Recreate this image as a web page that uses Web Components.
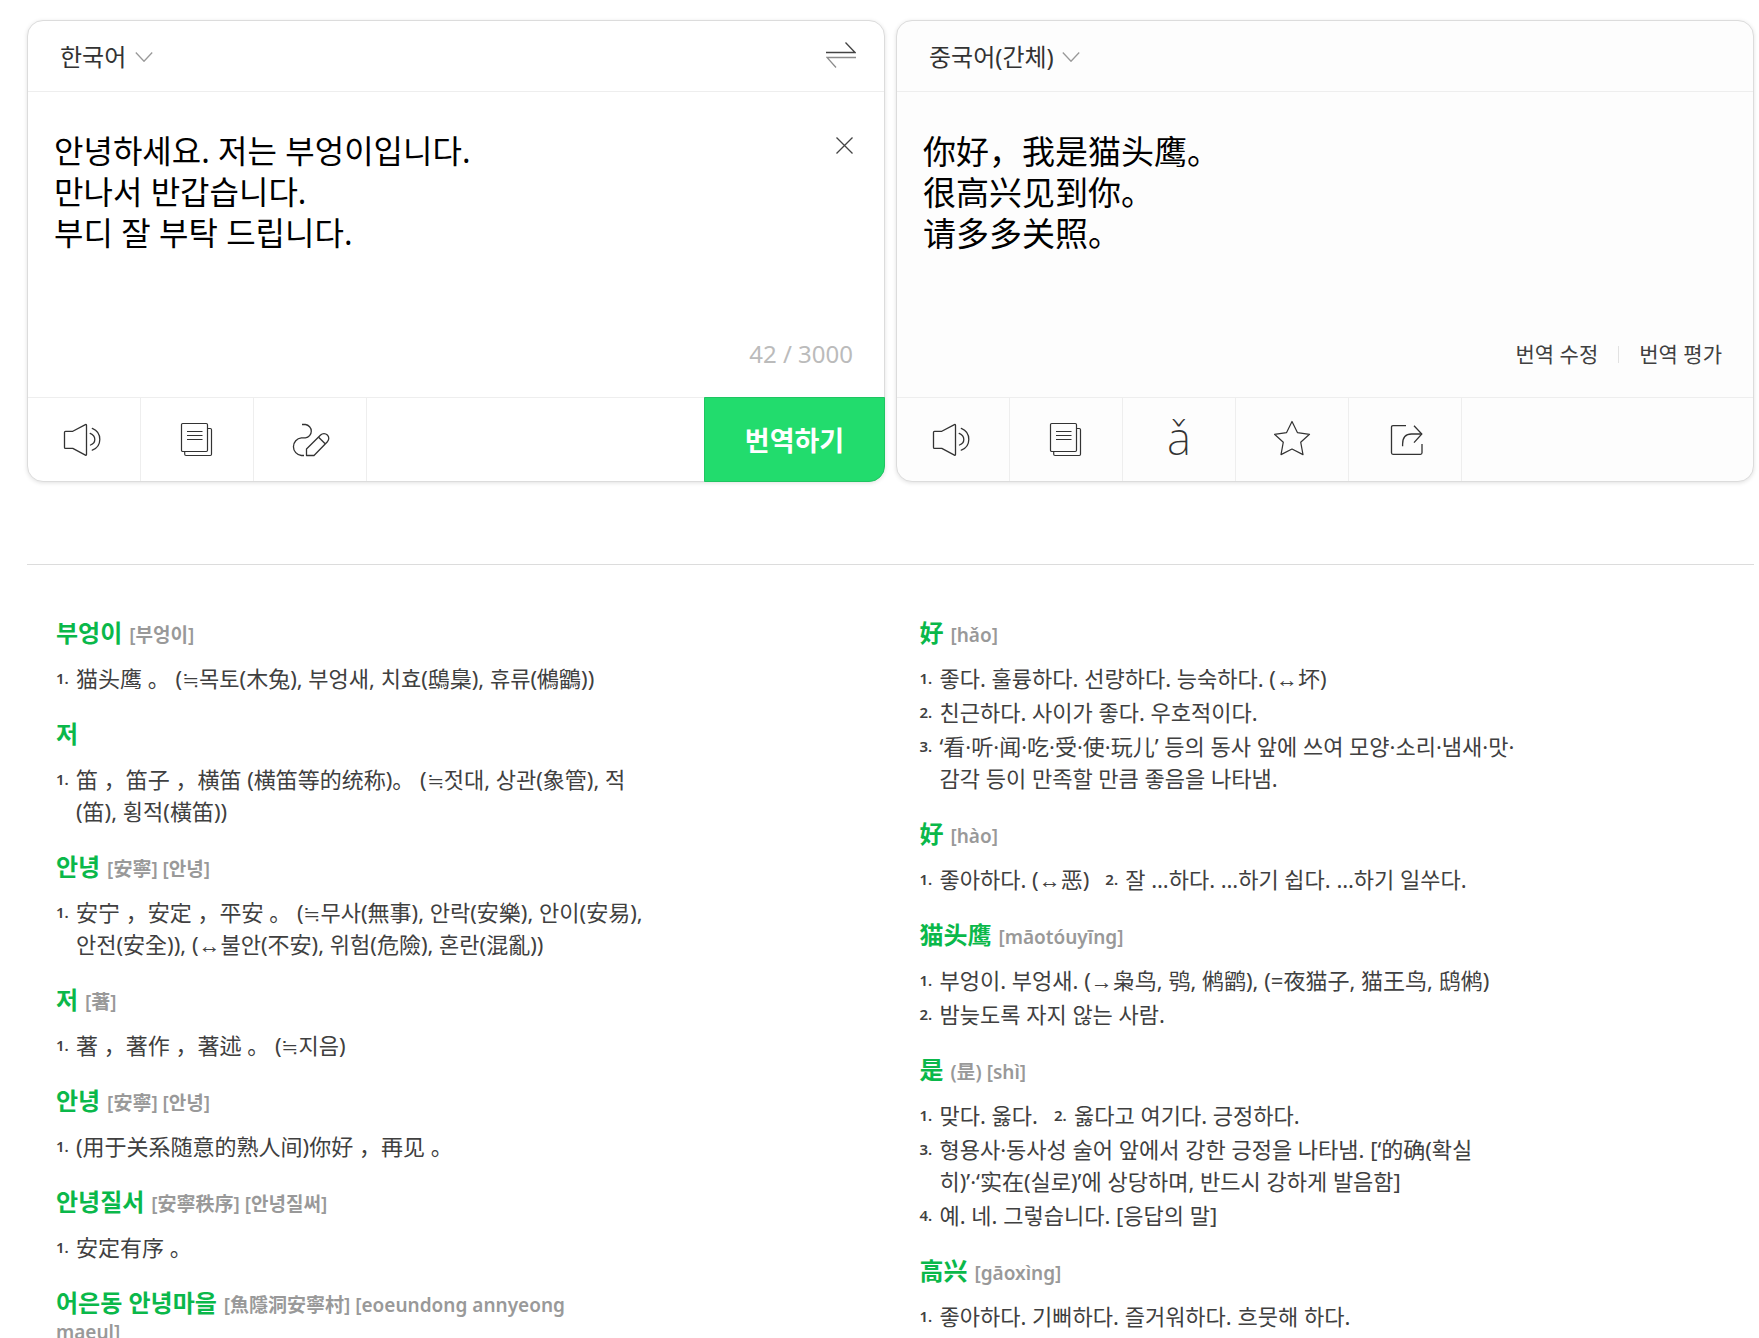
<!DOCTYPE html>
<html lang="ko">
<head>
<meta charset="utf-8">
<title>번역기</title>
<style>
  html { background: #fff; }
  body {
    margin: 0;
    font-family: "Noto Sans", "Noto Sans CJK KR", sans-serif;
    color: #404040;
    --line: #dcdcdc;
    --soft-line: #eeeeee;
    --brand: #22dc6d;
    --brand-line: #1fc562;
    --word: #0ab84a;
    --mute: #999999;
  }
  [lang="zh"] { font-family: "Noto Sans CJK SC", sans-serif; }
  .sign { font-family: "Noto Sans CJK SC", sans-serif; line-height: 0; }
  .arrow { font-family: "Liberation Sans", sans-serif; line-height: 0; }
</style>
</head>
<body>

<translator-page>
  <translate-card slot="card">
    <language-picker slot="head" label="원본 언어" value="한국어"></language-picker>
    <icon-button slot="head" label="언어 바꾸기" icon="swap"></icon-button>
    <source-text slot="text"></source-text>
    <char-count slot="foot" count="42" max="3000"></char-count>
    <icon-button slot="tools" cell label="듣기" icon="speaker"></icon-button>
    <icon-button slot="tools" cell label="복사" icon="copy"></icon-button>
    <icon-button slot="tools" cell label="필기 인식" icon="pen"></icon-button>
    <submit-button slot="action">번역하기</submit-button>
  </translate-card>

  <translate-card slot="card" tinted>
    <language-picker slot="head" label="번역 언어" value="중국어(간체)"></language-picker>
    <result-text slot="text" lang="zh">你好，我是猫头鹰。<br>很高兴见到你。<br>请多多关照。</result-text>
    <result-links slot="foot"></result-links>
    <icon-button slot="tools" cell label="듣기" icon="speaker"></icon-button>
    <icon-button slot="tools" cell label="복사" icon="copy"></icon-button>
    <icon-button slot="tools" cell label="발음" icon="pinyin"></icon-button>
    <icon-button slot="tools" cell label="즐겨찾기" icon="star"></icon-button>
    <icon-button slot="tools" cell label="공유" icon="share"></icon-button>
  </translate-card>

  <dictionary-column slot="dictionary">
    <word-entry word="부엉이" sound="[부엉이]">
      <word-sense n="1.">猫头鹰 。 (<span class="sign">≒</span>목토(木兔), 부엉새, 치효(鴟梟), 휴류(鵂鶹))</word-sense>
    </word-entry>
    <word-entry word="저">
      <word-sense n="1.">笛 ，笛子 ，横笛 (横笛等的统称)。 (<span class="sign">≒</span>젓대, 상관(象管), 적(笛), 횡적(橫笛))</word-sense>
    </word-entry>
    <word-entry word="안녕" sound="[安寧] [안녕]">
      <word-sense n="1.">安宁 ，安定 ，平安 。 (<span class="sign">≒</span>무사(無事), 안락(安樂), 안이(安易), 안전(安全)), (<span class="arrow">↔</span>불안(不安), 위험(危險), 혼란(混亂))</word-sense>
    </word-entry>
    <word-entry word="저" sound="[著]">
      <word-sense n="1.">著 ，著作 ，著述 。 (<span class="sign">≒</span>지음)</word-sense>
    </word-entry>
    <word-entry word="안녕" sound="[安寧] [안녕]">
      <word-sense n="1.">(用于关系随意的熟人间)你好 ，再见 。</word-sense>
    </word-entry>
    <word-entry word="안녕질서" sound="[安寧秩序] [안녕질써]">
      <word-sense n="1.">安定有序 。</word-sense>
    </word-entry>
    <word-entry word="어은동 안녕마을" sound="[魚隱洞安寧村] [eoeundong annyeong maeul]"></word-entry>
  </dictionary-column>

  <dictionary-column slot="dictionary">
    <word-entry word="好" sound="[hǎo]">
      <word-sense n="1.">좋다. 훌륭하다. 선량하다. 능숙하다. (<span class="arrow">↔</span>坏)</word-sense>
      <word-sense n="2.">친근하다. 사이가 좋다. 우호적이다.</word-sense>
      <word-sense n="3.">‘看·听·闻·吃·受·使·玩儿’ 등의 동사 앞에 쓰여 모양·소리·냄새·맛·감각 등이 만족할 만큼 좋음을 나타냄.</word-sense>
    </word-entry>
    <word-entry word="好" sound="[hào]">
      <word-sense n="1." brief>좋아하다. (<span class="arrow">↔</span>恶)</word-sense>
      <word-sense n="2." brief>잘 …하다. …하기 쉽다. …하기 일쑤다.</word-sense>
    </word-entry>
    <word-entry word="猫头鹰" sound="[māotóuyīng]">
      <word-sense n="1.">부엉이. 부엉새. (<span class="arrow">→</span>枭鸟, 鸮, 鸺鹠), (=夜猫子, 猫王鸟, 鸱鸺)</word-sense>
      <word-sense n="2.">밤늦도록 자지 않는 사람.</word-sense>
    </word-entry>
    <word-entry word="是" sound="(昰) [shì]">
      <word-sense n="1." brief>맞다. 옳다.</word-sense>
      <word-sense n="2." brief>옳다고 여기다. 긍정하다.</word-sense>
      <word-sense n="3.">형용사·동사성 술어 앞에서 강한 긍정을 나타냄. [‘的确(확실히)’·‘实在(실로)’에 상당하며, 반드시 강하게 발음함]</word-sense>
      <word-sense n="4.">예. 네. 그렇습니다. [응답의 말]</word-sense>
    </word-entry>
    <word-entry word="高兴" sound="[gāoxìng]">
      <word-sense n="1.">좋아하다. 기뻐하다. 즐거워하다. 흐뭇해 하다.</word-sense>
    </word-entry>
  </dictionary-column>
</translator-page>

<script>
const RESET = `
  *, *::before { box-sizing: border-box; }
  button, select, textarea { font: inherit; color: inherit; margin: 0; padding: 0; border: 0; background: none; }
  button { cursor: pointer; }
  svg { display: block; fill: none; stroke: currentColor; }
`;

function define(name, render) {
  customElements.define(name, class extends HTMLElement {
    connectedCallback() {
      if (this.shadowRoot) return;
      this.attachShadow({ mode: "open" }).innerHTML = render(this);
    }
  });
}

const ICONS = {
  swap: `<svg width="30" height="28" viewBox="0 0 30 28" stroke-width="1.3">
    <path d="M0 10.5H29L19.5 0.5" stroke="#444"/><path d="M30 15.5H1L10 25.5" stroke="#8c8c8c"/></svg>`,
  close: `<svg width="17" height="17" viewBox="0 0 17 17" stroke-width="1.3"><path d="M0.5 0.5L16.5 16.5M16.5 0.5L0.5 16.5"/></svg>`,
  speaker: `<svg width="44" height="43" viewBox="0 0 44 43" stroke-width="1.3" stroke-linejoin="round" stroke-linecap="round">
    <path d="M3.5 13.3H10.8L23.4 6.6Q24.5 6.2 24.5 7.2V36.6Q24.5 37.6 23.4 37.1L10.8 30.4H3.5Q2.5 30.4 2.5 29.4V14.3Q2.5 13.3 3.5 13.3Z"/>
    <path d="M28.2 15.4Q32.8 17.5 32.8 21.4T28.5 27"/>
    <path d="M30.3 10.4C35 12.3 37.8 16.6 37.8 21.5S35 30.3 30.3 32.2"/></svg>`,
  copy: `<svg width="44" height="43" viewBox="0 0 44 43" stroke-width="1.2" stroke-linejoin="round">
    <rect x="6.5" y="5.5" width="26" height="28" rx="1.2"/>
    <path d="M33 10.5H35.3Q36.5 10.5 36.5 11.7V36.3Q36.5 37.5 35.3 37.5H11Q9.7 37.5 9.7 36.3V34"/>
    <path d="M12 13.5H27.5M12 17.5H27.5M12 21.5H27.5"/></svg>`,
  pen: `<svg width="44" height="43" viewBox="0 0 44 43" stroke-width="1.3" stroke-linejoin="round">
    <path d="M14 6.5H17.4A6.7 6.7 0 0 1 17.4 19.8H13.4A8.9 8.9 0 0 0 13.4 37.5H16"/>
    <path d="M18.5 37.5V31L32.6 17A4.6 4.6 0 0 1 39.4 23.7L26 37.5Z"/>
    <path d="M30.6 19.2L37.2 25.8"/></svg>`,
  pinyin: `<span class="pinyin">ǎ</span>`,
  star: `<svg width="44" height="43" viewBox="0 0 44 43" stroke-width="1.2" stroke-linejoin="round">
    <path d="M22 3.5L27.4 14.6L39.5 16.3L30.7 24.2L33 36.6L22 31L11 36.6L13.3 24.2L4.5 16.3L16.6 14.6Z"/></svg>`,
  share: `<svg width="44" height="43" viewBox="0 0 44 43" stroke-width="1.3">
    <path d="M23 7.7H10Q8.5 7.7 8.5 9.2V34.8Q8.5 36.3 10 36.3H37.5Q39 36.3 39 34.8V26"/>
    <path d="M19.6 28.2V26Q19.6 16 28.5 16H38.8"/><path d="M31 7.8L38.8 16L31 24.6"/></svg>`
};

define("translator-page", () => `
  <style>${RESET}
    :host { display: block; height: 100vh; overflow: hidden auto; scrollbar-width: none; padding: 20px 5px 0 27px; box-sizing: border-box; }
    .cards { display: grid; grid-template-columns: 1fr 1fr; gap: 11px; }
    .dictionary { display: grid; grid-template-columns: 1fr 1fr; margin-top: 82px; padding-top: 57px; border-top: 1px solid var(--line); }
  </style>
  <main class="cards"><slot name="card"></slot></main>
  <section class="dictionary"><slot name="dictionary"></slot></section>`);

define("translate-card", () => `
  <style>${RESET}
    :host { display: flex; flex-direction: column; border: 1px solid var(--line); border-radius: 16px; box-shadow: 0 1px 4px rgba(0,0,0,.12); background: #fff; }
    :host([tinted]) { background: #fdfdfd; }
    header { display: flex; align-items: center; justify-content: space-between; height: 71px; padding: 0 28px 0 32px; border-bottom: 1px solid var(--soft-line); }
    .text { display: flex; flex-direction: column; min-height: 233px; padding: 38px 31px 0 26px; }
    .foot { display: flex; justify-content: flex-end; align-items: center; height: 72px; padding: 0 31px 14px; }
    footer { display: flex; height: 84px; border-top: 1px solid var(--soft-line); }
    .action { display: flex; margin: -1px -1px -1px auto; }
  </style>
  <header><slot name="head"></slot></header>
  <div class="text"><slot name="text"></slot></div>
  <div class="foot"><slot name="foot"></slot></div>
  <footer><slot name="tools"></slot><div class="action"><slot name="action"></slot></div></footer>`);

define("language-picker", el => `
  <style>${RESET}
    :host { display: flex; align-items: center; gap: 8px; padding-top: 2px; font-size: 24px; line-height: 36px; color: #333; }
    select { appearance: none; cursor: pointer; }
    svg { color: #999; }
  </style>
  <select aria-label="${el.getAttribute("label")}"><option>${el.getAttribute("value")}</option></select>
  <svg width="18" height="10" viewBox="0 0 18 10" stroke-width="1.3" aria-hidden="true"><path d="M0.8 0.5L9 9.3L17.2 0.5"/></svg>`);

define("icon-button", el => `
  <style>${RESET}
    :host { display: flex; color: #333; }
    :host([cell]) { width: 113px; border-right: 1px solid var(--soft-line); box-sizing: border-box; }
    button { display: flex; align-items: center; justify-content: center; flex: 1; }
    .pinyin { font: 200 46px/43px "Noto Sans", sans-serif; padding-bottom: 4px; }
  </style>
  <button type="button" aria-label="${el.getAttribute("label")}">${ICONS[el.getAttribute("icon")]}</button>`);

define("source-text", () => `
  <style>${RESET}
    :host { display: flex; align-items: flex-start; flex: 1; font-size: 32px; line-height: 41px; color: #000; }
    textarea { flex: 1; height: 164px; resize: none; outline: none; overflow: hidden; }
    button { padding-top: 7px; color: #444; }
  </style>
  <textarea aria-label="번역할 내용" spellcheck="false">안녕하세요. 저는 부엉이입니다.
만나서 반갑습니다.
부디 잘 부탁 드립니다.</textarea>
  <button type="button" aria-label="지우기">${ICONS.close}</button>`);

define("result-text", () => `
  <style>:host { display: block; font-size: 33px; line-height: 41px; color: #000; }</style><slot></slot>`);

define("char-count", el => `
  <style>:host { display: block; font-size: 24px; line-height: 32px; color: #bbb; }</style>
  ${el.getAttribute("count")} / ${el.getAttribute("max")}`);

define("result-links", () => `
  <style>${RESET}
    :host { display: flex; align-items: center; gap: 20px; font-size: 21px; line-height: 32px; color: #404040; }
    i { width: 1px; height: 17px; background: #e2e2e2; }
  </style>
  <button type="button">번역 수정</button><i></i><button type="button">번역 평가</button>`);

define("submit-button", () => `
  <style>${RESET}
    :host { display: flex; }
    button { width: 181px; background: var(--brand); border: 1px solid var(--brand-line); border-radius: 0 0 16px 0; color: #fff; font-size: 27px; font-weight: 700; }
  </style>
  <button type="submit"><slot></slot></button>`);

define("dictionary-column", () => `
  <style>:host { display: flex; flex-direction: column; gap: 29px; padding-left: 29px; }</style><slot></slot>`);

define("word-entry", el => `
  <style>${RESET}
    :host { display: block; }
    h3 { margin: 0 0 13px; max-width: 560px; font-size: 19px; line-height: 27px; font-weight: 600; color: var(--mute); }
    strong { font-size: 24px; line-height: 20px; font-weight: 700; color: var(--word); margin-right: 2px; }
    div { display: flex; flex-wrap: wrap; gap: 2px 16px; max-width: 603px; }
  </style>
  <h3><strong>${el.getAttribute("word")}</strong> ${el.getAttribute("sound") || ""}</h3>
  <div><slot></slot></div>`);

define("word-sense", el => `
  <style>
    :host { display: flex; flex: 0 0 100%; font-size: 22px; line-height: 32px; }
    :host([brief]) { flex: none; }
    b { flex: none; width: 20px; font-size: 15px; font-weight: 600; }
    span { min-width: 0; }
  </style>
  <b>${el.getAttribute("n")}</b><span><slot></slot></span>`);
</script>
</body>
</html>
